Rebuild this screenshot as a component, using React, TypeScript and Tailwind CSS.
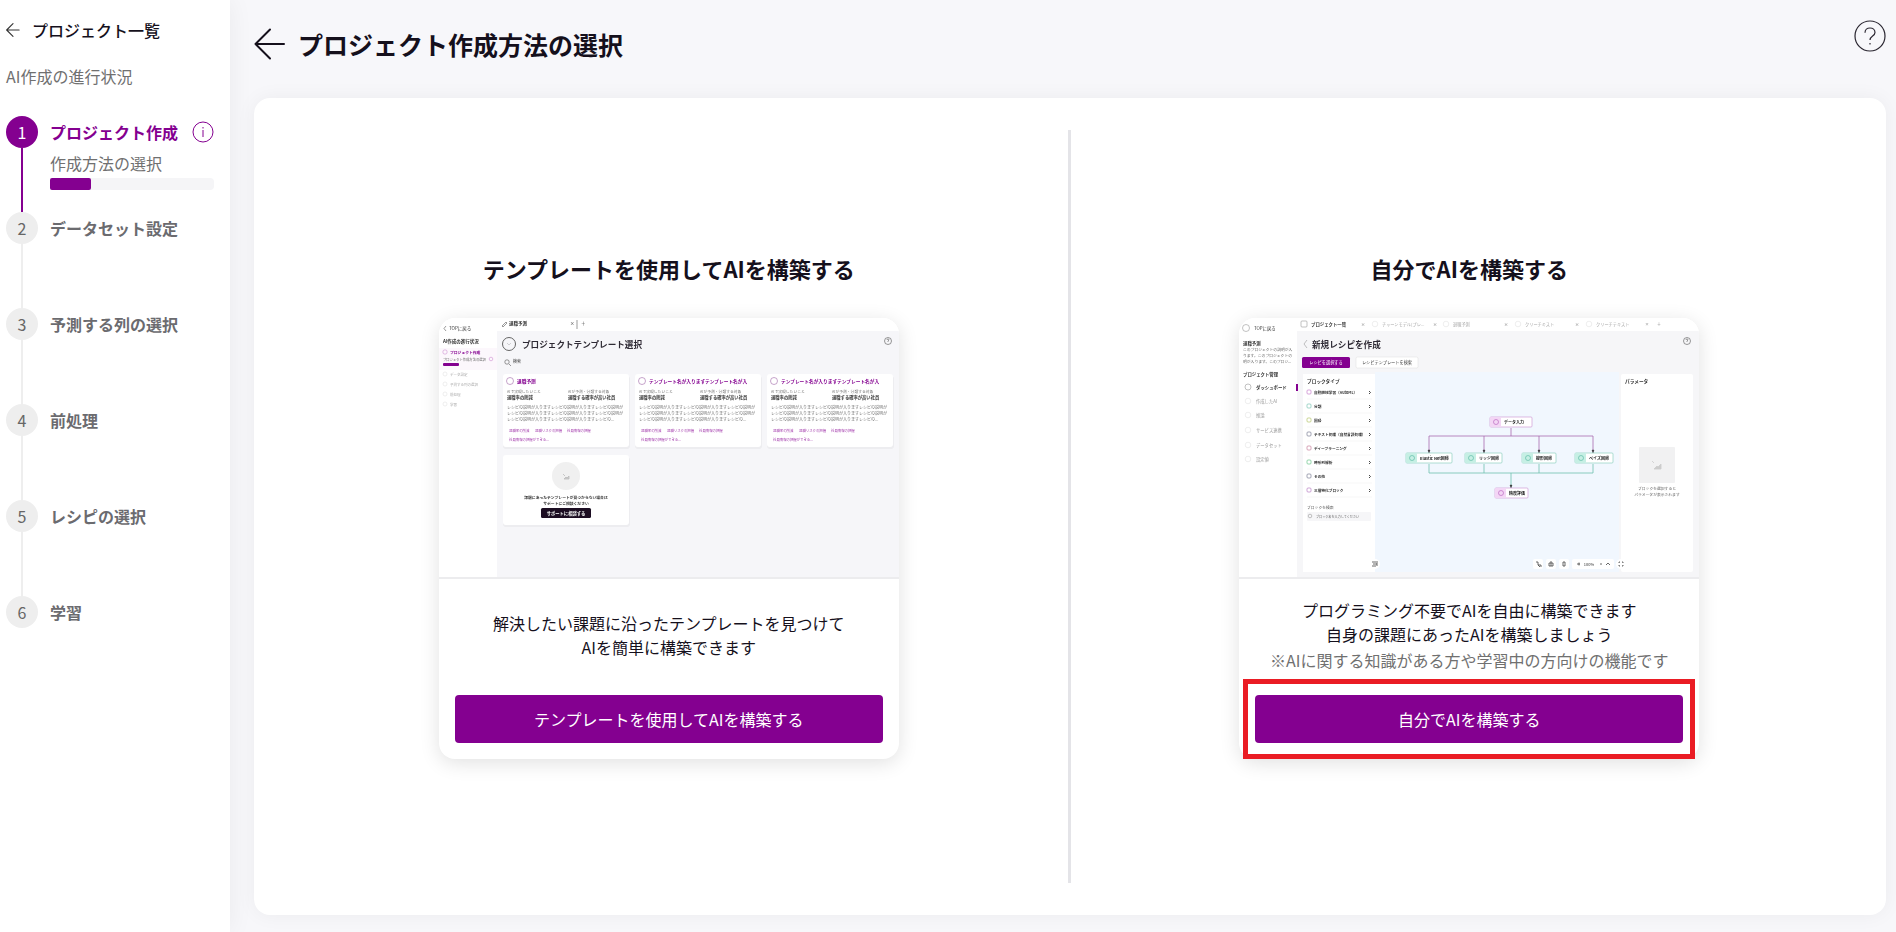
import type { ReactNode } from 'react';

const steps = [
  { id: 1, label: 'プロジェクト作成', detail: '作成方法の選択', active: true },
  { id: 2, label: 'データセット設定' },
  { id: 3, label: '予測する列の選択' },
  { id: 4, label: '前処理' },
  { id: 5, label: 'レシピの選択' },
  { id: 6, label: '学習' },
];

const templateCards = [
  { x: 64, title: '退職予測' },
  { x: 196, title: 'テンプレート名が入りますテンプレート名が入' },
  { x: 328, title: 'テンプレート名が入りますテンプレート名が入' },
];

const templateMenu = [
  { y: 57, label: 'データ設定' },
  { y: 67, label: '予測する列の選択' },
  { y: 77, label: '前処理' },
  { y: 87, label: '学習' },
];

const recipeMenu = [
  { y: 84, label: '作成したAI' },
  { y: 98, label: '推論' },
  { y: 113, label: 'サービス連携' },
  { y: 128, label: 'データセット' },
  { y: 142, label: '設定値' },
];

const blockTypes = [
  { y: 75, label: '自動機械学習（AutoML）', color: '#c77fcb' },
  { y: 89, label: '分類', color: '#7cc4b4' },
  { y: 103, label: '回帰', color: '#b5c46a' },
  { y: 117, label: 'テキスト処理（自然言語処理）', color: '#7b8096' },
  { y: 131, label: 'ディープラーニング', color: '#c77f9b' },
  { y: 145, label: '時系列解析', color: '#6cc48a' },
  { y: 159, label: 'その他', color: '#7b8096' },
  { y: 173, label: '三層特化ブロック', color: '#b77fc4' },
];

const recipeTabs = [
  { x: 136, label: 'チャーンモデル(プレ...', close: 122 },
  { x: 207, label: '退職予測', close: 194 },
  { x: 279, label: 'クリーチキスト', close: 265 },
  { x: 350, label: 'クリーチテキスト', close: 336 },
];

const flowNodes = [
  { x: 251, y: 99, w: 42, label: 'データ入力', tone: 'purple' },
  { x: 167, y: 135, w: 46, label: 'Elastic Net回帰', tone: 'green' },
  { x: 226, y: 135, w: 37, label: 'リッジ回帰', tone: 'green' },
  { x: 283, y: 135, w: 34, label: '線形回帰', tone: 'green' },
  { x: 336, y: 135, w: 38, label: 'ベイズ回帰', tone: 'green' },
  { x: 256, y: 170, w: 33, label: '精度評価', tone: 'purple' },
];

function BackArrow({ className, weight }: { className: string; weight: number }) {
  return (
    <svg viewBox="0 0 32 32" className={className} fill="none" stroke="currentColor" strokeWidth={weight} aria-hidden="true">
      <path d="M30 16H1.500M16 1.500L1.500 16L16 30.500" strokeLinecap="round" strokeLinejoin="round" />
    </svg>
  );
}

function InfoIcon() {
  return (
    <svg viewBox="0 0 22 22" className="size-[22px]" fill="none" stroke="#840090" aria-hidden="true">
      <circle cx="11" cy="11" r="10" strokeWidth="1" />
      <path d="M11 9v7M11 6v1.500" strokeWidth="1" />
    </svg>
  );
}

function HelpIcon() {
  return (
    <svg viewBox="0 0 32 32" className="size-8" fill="none" stroke="#2a2630" strokeWidth="1.200" aria-hidden="true">
      <circle cx="16" cy="16" r="15" />
      <path d="M11 12.800c0-2.900 2.200-4.800 5-4.800s5 1.900 5 4.500c0 3.600-5 3.400-5 7.500M16 23v1.500" />
    </svg>
  );
}

function TemplatePreview() {
  return (
    <svg viewBox="0 0 460 259" className="block w-full" role="img" aria-label="プロジェクトテンプレート選択">
      <filter id="template-soften">
        <feGaussianBlur stdDeviation="0.45" />
      </filter>
      <rect width="460" height="259" fill="#fff" />
      <rect x="58" y="13" width="402" height="246" fill="#f6f6f9" />
      <g filter="url(#template-soften)">
        <rect y="30" width="58" height="22" fill="#fcf7fc" />
        <g fill="none" stroke="#555" strokeWidth=".6">
          <path d="M7 8l-2 2.500L7 13M63 8l4-4 1 1-4 4zM138 2v9" />
          <circle cx="70" cy="26" r="6.500" strokeWidth=".9" />
          <path d="M68 25l2 2 2-2" opacity=".4" />
          <circle cx="449" cy="23" r="3.500" />
          <path d="M448 22c0-1.500 2-1.500 2 0l-1 1v1" />
          <circle cx="68" cy="44" r="2.200" />
          <path d="M70 46l2 2" />
        </g>
        <g fontSize="4.500" fill="#333">
          <text x="10" y="12">TOPに戻る</text>
          <text x="4" y="25" fontWeight="700">AI作成の進行状況</text>
          <text x="70" y="7" fontWeight="700">退職予測</text>
          <text x="131" y="7">×</text>
          <text x="142" y="7">＋</text>
          <text x="74" y="45" fontSize="4">検索</text>
        </g>
        <text x="83" y="30" fontSize="8.600" fontWeight="700" fill="#2f2b35">プロジェクトテンプレート選択</text>
        <circle cx="6" cy="34" r="2.200" fill="none" stroke="#c77fcb" strokeWidth=".5" />
        <text x="11" y="36" fontSize="3.800" fontWeight="700" fill="#840090">プロジェクト作成</text>
        <text x="4" y="43" fontSize="3.300" fill="#666">プロジェクト作成方法の選択</text>
        <circle cx="52" cy="41" r="1.800" fill="none" stroke="#c77fcb" strokeWidth=".5" />
        <rect x="4" y="45" width="16" height="3" rx="1" fill="#840090" />
        {templateMenu.map((item) => (
          <g key={item.label}>
            <circle cx="6" cy={item.y - 1} r="2" fill="none" stroke="#ddd" strokeWidth=".5" />
            <text x="11" y={item.y + 1} fontSize="3.500" fill="#aaa">{item.label}</text>
          </g>
        ))}
        {templateCards.map((card) => (
          <g key={card.x}>
            <rect x={card.x} y="58" width="127" height="73" rx="3" fill="#ededf0" />
            <rect x={card.x} y="56" width="126" height="73" rx="3" fill="#fff" />
            <circle cx={card.x + 7} cy="63" r="3.500" fill="none" stroke="#a066a8" strokeWidth=".6" />
            <text x={card.x + 14} y="65" fontSize="4.700" fontWeight="700" fill="#840090">{card.title}</text>
            <g fontSize="4" fill="#777">
              <text x={card.x + 4} y="75" fontSize="3.800">AIで実現したいこと</text>
              <text x={card.x + 65} y="75" fontSize="3.800">AIが予測・分類する対象</text>
              <g fontWeight="700" fill="#333" fontSize="4.300">
                <text x={card.x + 4} y="81">退職率の削減</text>
                <text x={card.x + 65} y="81">退職する確率が高い社員</text>
              </g>
              <text x={card.x + 4} y="91">レシピの説明が入りますレシピの説明が入りますレシピの説明が</text>
              <text x={card.x + 4} y="97">レシピの説明が入りますレシピの説明が入りますレシピの説明が</text>
              <text x={card.x + 4} y="103">レシピの説明が入りますレシピの説明が入りますレシピの...</text>
              <g fill="#a33bac" fontSize="3.400">
                <text x={card.x + 6} y="114">退職率の削減</text>
                <text x={card.x + 32} y="114">退職リスクの把握</text>
                <text x={card.x + 64} y="114">社員情報の把握</text>
                <text x={card.x + 6} y="123">社員情報の把握ができる...</text>
              </g>
            </g>
          </g>
        ))}
        <rect x="64" y="139" width="127" height="70" rx="3" fill="#ededf0" />
        <rect x="64" y="137" width="126" height="70" rx="3" fill="#fff" />
        <circle cx="127" cy="158" r="14" fill="#f0f0f0" />
        <path d="M124 156l2 2M125 161l2-2 1 1 2-2v3z" stroke="#bbb" strokeWidth=".8" fill="#ccc" />
        <g fontSize="3.800" fill="#333" fontWeight="700" textAnchor="middle">
          <text x="127" y="181">課題にあったテンプレートが見つからない場合は</text>
          <text x="127" y="187">サポートにご相談ください</text>
          <rect x="102" y="190" width="50" height="10" rx="1.500" fill="#1b1022" />
          <text x="127" y="197" fontSize="4.300" fill="#fff">サポートに相談する</text>
        </g>
      </g>
    </svg>
  );
}

function RecipePreview() {
  return (
    <svg viewBox="0 0 460 259" className="block w-full" role="img" aria-label="新規レシピを作成">
      <filter id="recipe-soften">
        <feGaussianBlur stdDeviation="0.45" />
      </filter>
      <rect width="460" height="259" fill="#fff" />
      <rect x="58" y="13" width="402" height="246" fill="#f6f6f8" />
      <g filter="url(#recipe-soften)">
        <rect x="64" y="56" width="73" height="198" fill="#fff" />
        <rect x="136" y="54" width="244" height="200" fill="#f1f7fe" />
        <rect x="382" y="56" width="72" height="198" rx="2" fill="#fff" />
        <g fill="none" stroke="#999" strokeWidth=".6">
          <circle cx="7" cy="10" r="3.500" />
          <rect x="62" y="3" width="6" height="6" rx="1" />
          <path d="M68 22l-3 4 3 4" />
          <circle cx="448" cy="23" r="3.500" stroke="#555" />
          <circle cx="9" cy="69" r="3" />
          <path d="M447 22c0-1.500 2-1.500 2 0l-1 1v1" stroke="#555" />
        </g>
        <g fontSize="4.400" fill="#333">
          <text x="15" y="12">TOPに戻る</text>
          <text x="72" y="8" fontWeight="700">プロジェクト一覧</text>
          <text x="4" y="27" fontWeight="700">退職予測</text>
          <text x="4" y="58" fontWeight="700">プロジェクト管理</text>
          <text x="17" y="71" fontWeight="700">ダッシュボード</text>
          <text x="68" y="65" fontSize="4.700" fontWeight="700">ブロックタイプ</text>
          <text x="386" y="65" fontSize="4.700" fontWeight="700">パラメータ</text>
        </g>
        <g fontSize="3.800" fill="#666">
          <text x="4" y="33">このプロジェクトの説明が入</text>
          <text x="4" y="39">ります。このプロジェクトの</text>
          <text x="4" y="45">明が入ります。このプロジ...</text>
        </g>
        <text x="73" y="30" fontSize="8.600" fontWeight="700" fill="#2f2b35">新規レシピを作成</text>
        <rect x="57" y="66" width="2" height="7" fill="#840090" />
        <rect x="63" y="39" width="48" height="11" rx="1.500" fill="#840090" />
        <rect x="117" y="39" width="62" height="11" rx="1.500" fill="#fff" stroke="#ddd" strokeWidth=".5" />
        <text x="87" y="46" fontSize="4.200" fill="#fff" textAnchor="middle">レシピを選択する</text>
        <text x="148" y="46" fontSize="4.200" fill="#444" textAnchor="middle">レシピテンプレートを検索</text>
        {recipeTabs.map((tab) => (
          <g key={tab.x} fontSize="4.200" fill="#aaa">
            <circle cx={tab.x} cy="6" r="2.800" fill="none" stroke="#ddd" strokeWidth=".5" />
            <text x={tab.x + 7} y="8">{tab.label}</text>
            <text x={tab.close} y="8" fill="#666">×</text>
          </g>
        ))}
        <text x="406" y="8" fontSize="4" fill="#777">×</text>
        <text x="418" y="8" fontSize="4" fill="#777">＋</text>
        {recipeMenu.map((item) => (
          <g key={item.label}>
            <circle cx="9" cy={item.y - 1} r="2.800" fill="none" stroke="#ddd" strokeWidth=".5" />
            <text x="17" y={item.y + 1} fontSize="4.300" fill="#999">{item.label}</text>
          </g>
        ))}
        {blockTypes.map((block) => (
          <g key={block.label}>
            <rect x="68" y={block.y - 3} width="4" height="4" rx="1" fill="none" stroke={block.color} strokeWidth=".7" />
            <text x="75" y={block.y + 1} fontSize="3.700" fontWeight="700" fill="#333">{block.label}</text>
            <path d={`M130 ${block.y - 2}l1.500 1.500-1.500 1.500`} fill="none" stroke="#333" strokeWidth=".9" />
            <path d={`M68 ${block.y + 6}h65`} stroke="#eee" strokeWidth=".5" />
          </g>
        ))}
        <text x="68" y="191" fontSize="3.800" fill="#555">ブロックを検索</text>
        <rect x="68" y="194" width="64" height="9" rx="1" fill="#f6f6f8" />
        <circle cx="71" cy="198" r="1.800" fill="none" stroke="#888" strokeWidth=".5" />
        <text x="77" y="200" fontSize="3.100" fill="#666">ブロック名を入力してください</text>
        <g fill="none" strokeWidth=".8">
          <path d="M272 110v8M190 134v-16h164v16M245 118v16M300 118v16" stroke="#a96ab0" />
          <path d="M190 146v9h164v-9M245 146v9M300 146v9M272 155v14" stroke="#6fc0ae" />
        </g>
        <path d="M189 132h2l-1 3zM244 132h2l-1 3zM299 132h2l-1 3zM353 132h2l-1 3zM271 167h2l-1 3z" fill="#333" stroke="#333" strokeWidth=".4" />
        {flowNodes.map((node) => (
          <g key={node.label}>
            <rect x={node.x} y={node.y} width={node.w} height="10" rx="1" fill="#fff" stroke={node.tone === 'purple' ? '#c98fd0' : '#7cc9b5'} strokeWidth=".6" />
            <rect x={node.x} y={node.y} width="11" height="10" rx="1" fill={node.tone === 'purple' ? '#f3d6f5' : '#c6efe4'} />
            <circle cx={node.x + 6} cy={node.y + 5} r="2.500" fill="none" stroke={node.tone === 'purple' ? '#b35bbb' : '#4fb59d'} strokeWidth=".6" />
            <text x={node.x + 14} y={node.y + 7} fontSize="4" fontWeight="700" fill="#222">{node.label}</text>
          </g>
        ))}
        <rect x="400" y="129" width="36" height="36" rx="1" fill="#f1f1f2" />
        <path d="M413 143l2 2M415 151l3-3 1 1 3-3v5z" stroke="#ccc" strokeWidth=".8" fill="#ccc" />
        <g fontSize="3.800" fill="#666" textAnchor="middle">
          <text x="418" y="172">ブロックを選択すると</text>
          <text x="418" y="178">パラメータが表示されます</text>
        </g>
        <g fill="#fff">
          <circle cx="136" cy="246" r="5" />
          <rect x="294" y="241" width="10" height="10" rx="2" />
          <rect x="307" y="241" width="10" height="10" rx="2" />
          <rect x="320" y="241" width="10" height="10" rx="2" />
          <rect x="333" y="241" width="42" height="10" rx="2" />
          <circle cx="382" cy="246" r="5" />
        </g>
        <path
          d="M133 244h4M134 246h4M133 248h4M138 243v5M297 244h2v3h3v2M299 247l2 2M310 245h4v3h-4zM312 243v5M324 244h2v4h-2zM338 246h3M340 244.500v3M361 246h2M367 247l2-2 2 2M380 245v-1h1M383 244h1v1M380 247v1h1M383 248h1v-1"
          fill="none"
          stroke="#444"
          strokeWidth=".8"
        />
        <text x="350" y="248" fontSize="4" textAnchor="middle" fill="#333">100%</text>
      </g>
    </svg>
  );
}

type MethodProps = {
  title: string;
  preview: ReactNode;
  children: ReactNode;
  highlighted?: boolean;
};

function Method({ title, preview, children, highlighted }: MethodProps) {
  return (
    <section className="flex flex-1 flex-col items-center justify-center">
      <h2 className="mb-9 text-[22px] leading-7 font-bold">{title}</h2>
      <div className="flex w-[460px] flex-col rounded-2xl bg-white shadow-[0_4px_20px_rgba(0,0,0,0.12)]">
        <div className="overflow-hidden rounded-t-2xl border-b-2 border-[#ececee]">{preview}</div>
        <div className="flex h-[180px] flex-col px-4 pb-4">
          <div className="flex flex-1 flex-col justify-center pb-1 text-center leading-6">
            {children}
          </div>
          <div className="relative">
            <button type="button" className="h-12 w-full rounded bg-[#840090] text-white">
              {title}
            </button>
            {highlighted && (
              <div className="pointer-events-none absolute -inset-x-3 -inset-y-4 border-5 border-[#ea1c24]" />
            )}
          </div>
        </div>
      </div>
    </section>
  );
}

export default function App() {
  return (
    <div className="flex min-h-screen bg-[#f7f7fa] font-['Noto_Sans_CJK_JP',sans-serif] text-base text-[#15101c]">
      <aside className="w-[230px] shrink-0 bg-white pt-[18px] pl-[6px] shadow-[0_0_24px_rgba(0,0,0,0.06)]">
        <a href="#projects" className="flex items-center gap-3 leading-6 font-medium">
          <BackArrow className="size-[14px] text-[#333]" weight={2.5} />
          プロジェクト一覧
        </a>
        <p className="mt-[22px] leading-6 text-[#707070]">AI作成の進行状況</p>
        <ol className="mt-7">
          {steps.map((step, index) => (
            <li key={step.id} className="flex h-24 gap-3">
              <div className="flex w-8 flex-col items-center">
                {step.active ? (
                  <span className="flex size-8 shrink-0 items-center justify-center rounded-full bg-[#840090] text-white">
                    {step.id}
                  </span>
                ) : (
                  <span className="flex size-8 shrink-0 items-center justify-center rounded-full bg-[#eeeeee] text-[#666666]">
                    {step.id}
                  </span>
                )}
                {index < steps.length - 1 && (
                  <span className={step.active ? 'w-[2px] flex-1 bg-[#840090]' : 'w-[2px] flex-1 bg-[#eeeeee]'} />
                )}
              </div>
              {step.active ? (
                <div className="w-[164px]">
                  <div className="flex h-8 items-center justify-between font-bold text-[#840090]">
                    {step.label}
                    <button type="button" aria-label="詳細">
                      <InfoIcon />
                    </button>
                  </div>
                  <p className="leading-[30px] text-[#707070]">{step.detail}</p>
                  <div className="h-3 rounded-sm bg-[#f5f5f7]">
                    <div className="h-3 w-1/4 rounded-xs bg-[#840090]" />
                  </div>
                </div>
              ) : (
                <span className="leading-8 font-bold text-[#6b6b6f]">{step.label}</span>
              )}
            </li>
          ))}
        </ol>
      </aside>

      <main className="flex flex-1 flex-col pr-[10px] pb-[17px] pl-6">
        <header className="flex h-[98px] items-start justify-between">
          <div className="flex items-center gap-3 pt-6">
            <button type="button" aria-label="戻る">
              <BackArrow className="size-8" weight={2} />
            </button>
            <h1 className="text-[25px] leading-10 font-bold">プロジェクト作成方法の選択</h1>
          </div>
          <button type="button" aria-label="ヘルプ" className="mt-5">
            <HelpIcon />
          </button>
        </header>

        <div className="flex flex-1 rounded-2xl bg-white py-8 pr-[18px] pl-4 shadow-[0_0_20px_rgba(0,0,0,0.05)]">
          <Method title="テンプレートを使用してAIを構築する" preview={<TemplatePreview />}>
            <p>解決したい課題に沿ったテンプレートを見つけて</p>
            <p>AIを簡単に構築できます</p>
          </Method>
          <div className="w-[3px] bg-[#e4e4e8]" />
          <Method title="自分でAIを構築する" preview={<RecipePreview />} highlighted>
            <p>プログラミング不要でAIを自由に構築できます</p>
            <p>自身の課題にあったAIを構築しましょう</p>
            <p className="mt-[2px] text-[#707070]">※AIに関する知識がある方や学習中の方向けの機能です</p>
          </Method>
        </div>
      </main>
    </div>
  );
}
